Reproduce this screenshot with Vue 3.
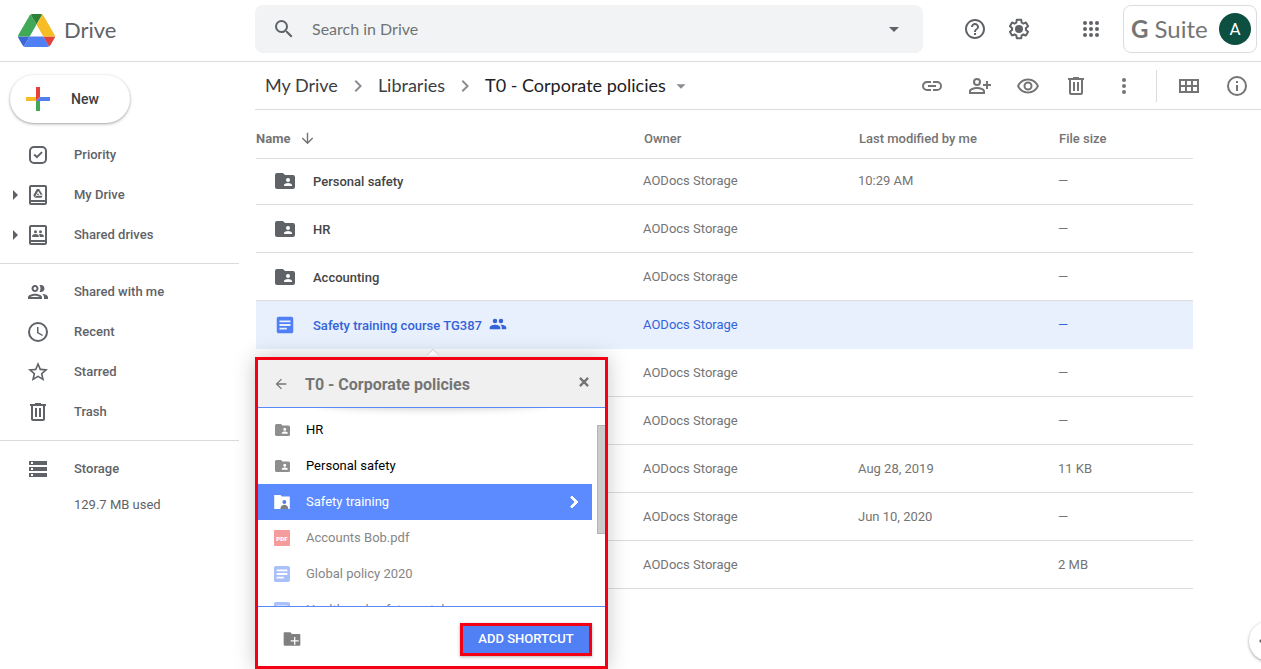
<script setup>
import { ref } from 'vue'

const icons = {
  search: 'M15.5 14h-.79l-.28-.27A6.47 6.47 0 0 0 16 9.5 6.5 6.5 0 1 0 9.5 16c1.61 0 3.09-.59 4.23-1.57l.27.28v.79l5 4.99L20.49 19l-4.99-5zm-6 0C7.01 14 5 11.99 5 9.5S7.01 5 9.5 5 14 7.01 14 9.5 11.99 14 9.5 14z',
  caret: 'M7 10l5 5 5-5z',
  help: 'M11 18h2v-2h-2v2zm1-16C6.48 2 2 6.48 2 12s4.48 10 10 10 10-4.48 10-10S17.52 2 12 2zm0 18c-4.41 0-8-3.59-8-8s3.59-8 8-8 8 3.59 8 8-3.59 8-8 8zm0-14c-2.21 0-4 1.79-4 4h2c0-1.1.9-2 2-2s2 .9 2 2c0 2-3 1.75-3 5h2c0-2.25 3-2.5 3-5 0-2.21-1.79-4-4-4z',
  gear: 'M13.85 22.25h-3.7c-.74 0-1.36-.54-1.45-1.27l-.27-1.89c-.27-.14-.53-.29-.79-.46l-1.8.72c-.7.26-1.47-.03-1.81-.65L2.2 15.53c-.35-.66-.2-1.44.36-1.88l1.53-1.19c-.01-.15-.02-.3-.02-.46 0-.15.01-.31.02-.46l-1.52-1.19c-.59-.45-.74-1.26-.37-1.88l1.85-3.19c.34-.62 1.11-.9 1.79-.63l1.81.73c.26-.17.52-.32.78-.46l.27-1.91c.09-.7.71-1.25 1.44-1.25h3.7c.74 0 1.36.54 1.45 1.27l.27 1.89c.27.14.53.29.79.46l1.8-.72c.71-.26 1.48.03 1.82.65l1.84 3.18c.36.66.2 1.44-.36 1.88l-1.52 1.19c.01.15.02.3.02.46s-.01.31-.02.46l1.52 1.19c.56.45.72 1.23.37 1.86l-1.86 3.22c-.34.62-1.11.9-1.8.63l-1.8-.72c-.26.17-.52.32-.78.46l-.27 1.91c-.1.68-.72 1.22-1.46 1.22zm-3.23-2h2.76l.37-2.55.53-.22c.44-.18.88-.44 1.34-.78l.45-.34 2.38.96 1.38-2.4-2.03-1.58.07-.56c.03-.26.06-.51.06-.78s-.03-.53-.06-.78l-.07-.56 2.03-1.58-1.39-2.4-2.39.96-.45-.35c-.42-.32-.87-.58-1.33-.77l-.52-.22-.37-2.55h-2.76l-.37 2.55-.53.21c-.44.19-.88.44-1.34.79l-.45.33-2.38-.95-1.39 2.39 2.03 1.58-.07.56a7 7 0 0 0-.06.79c0 .26.02.53.06.78l.07.56-2.03 1.58 1.38 2.4 2.39-.96.45.35c.43.33.86.58 1.33.77l.53.22.38 2.55z',
  apps: 'M6 8a2 2 0 1 0 0-4 2 2 0 0 0 0 4zm6 0a2 2 0 1 0 0-4 2 2 0 0 0 0 4zm6 0a2 2 0 1 0 0-4 2 2 0 0 0 0 4zM6 14a2 2 0 1 0 0-4 2 2 0 0 0 0 4zm6 0a2 2 0 1 0 0-4 2 2 0 0 0 0 4zm6 0a2 2 0 1 0 0-4 2 2 0 0 0 0 4zM6 20a2 2 0 1 0 0-4 2 2 0 0 0 0 4zm6 0a2 2 0 1 0 0-4 2 2 0 0 0 0 4zm6 0a2 2 0 1 0 0-4 2 2 0 0 0 0 4z',
  priority: 'M8 3h8a5 5 0 0 1 5 5v8a5 5 0 0 1-5 5H8a5 5 0 0 1-5-5V8a5 5 0 0 1 5-5zm0 2a3 3 0 0 0-3 3v8a3 3 0 0 0 3 3h8a3 3 0 0 0 3-3V8a3 3 0 0 0-3-3H8zm2.9 10.6L7.5 12.2l1.4-1.4 2 2 4.4-4.4 1.4 1.4-5.8 5.8z',
  mydrive: 'M19 2H5a2 2 0 0 0-2 2v16c0 1.100.9 2 2 2h14a2 2 0 0 0 2-2V4a2 2 0 0 0-2-2zm0 18H5v-1h14v1zm0-3H5V4h14v13zM13.1 6h-2.200L7.300 12.300l1.200 2.100 3.800-6.500 2.300 3.900h2L13.100 6zM12 10.200l-1.100 1.900h2.200L12 10.200zM10 12.700l-1.200 2.100h6.800l1-2.100H10z',
  shared: 'M19 2H5a2 2 0 0 0-2 2v16c0 1.100.9 2 2 2h14a2 2 0 0 0 2-2V4a2 2 0 0 0-2-2zm0 18H5v-1h14v1zm0-3H5V4h14v13zM9.500 10.200a1.500 1.500 0 1 0 0-3 1.500 1.500 0 0 0 0 3zm5 0a1.500 1.500 0 1 0 0-3 1.500 1.500 0 0 0 0 3zM6.200 14v-1c0-1.200 1.700-1.900 3.300-1.900s3.300.7 3.300 1.900v1H6.200zm7.500 0v-1c0-.7-.3-1.200-.8-1.700.5-.1 1-.2 1.600-.2 1.600 0 3.300.7 3.300 1.900v1h-4.100z',
  people: 'M9 13.750c-2.340 0-7 1.170-7 3.500V19h14v-1.750c0-2.330-4.660-3.500-7-3.500zM4.340 17c.84-.58 2.870-1.250 4.660-1.250s3.820.67 4.660 1.250H4.340zM9 12c1.930 0 3.500-1.570 3.500-3.500S10.930 5 9 5 5.500 6.570 5.500 8.500 7.070 12 9 12zm0-5c.83 0 1.500.67 1.500 1.500S9.830 10 9 10s-1.500-.67-1.500-1.500S8.170 7 9 7zm7.040 6.810c1.160.84 1.960 1.960 1.960 3.440V19h4v-1.750c0-2.020-3.500-3.170-5.960-3.440zM15 12c1.930 0 3.500-1.570 3.500-3.500S16.930 5 15 5c-.54 0-1.040.13-1.500.35.63.89 1 1.980 1 3.150s-.37 2.260-1 3.150c.46.22.96.35 1.500.35z',
  recent: 'M12 2a10 10 0 1 0 0 20 10 10 0 0 0 0-20zm0 18a8 8 0 1 1 0-16 8 8 0 0 1 0 16zm.500-13H11v6l5.200 3.100.8-1.200-4.500-2.700V7z',
  star: 'M22 9.240l-7.190-.62L12 2 9.190 8.630 2 9.240l5.460 4.730L5.820 21 12 17.270 18.180 21l-1.630-7.030L22 9.240zM12 15.400l-3.760 2.270 1-4.280-3.320-2.880 4.380-.38L12 6.100l1.710 4.040 4.380.38-3.320 2.880 1 4.280L12 15.400z',
  trash: 'M15 4V3H9v1H4v2h1v13c0 1.100.9 2 2 2h10a2 2 0 0 0 2-2V6h1V4h-5zm2 15H7V6h10v13zM9 8h2v9H9zm4 0h2v9h-2z',
  storage: 'M3 20h18v-4H3v4zm2-3h2v2H5v-2zM3 4v4h18V4H3zm4 3H5V5h2v2zm-4 7h18v-4H3v4zm2-3h2v2H5v-2z',
  link: 'M3.900 12c0-1.710 1.390-3.100 3.100-3.100h4V7H7a5 5 0 0 0 0 10h4v-1.900H7c-1.710 0-3.100-1.390-3.100-3.100zM8 13h8v-2H8v2zm9-6h-4v1.900h4a3.100 3.100 0 0 1 0 6.200h-4V17h4a5 5 0 0 0 0-10z',
  addperson: 'M9 12a4 4 0 1 0 0-8 4 4 0 0 0 0 8zm0-6a2 2 0 1 1 0 4 2 2 0 0 1 0-4zm0 7c-2.670 0-8 1.340-8 4v3h16v-3c0-2.660-5.330-4-8-4zm6 5H3v-.99C3.200 16.290 6.300 15 9 15s5.800 1.290 6 2v1zm5-8V7h-2v3h-3v2h3v3h2v-3h3v-2h-3z',
  eye: 'M12 6.500c3.790 0 7.170 2.130 8.820 5.500-1.650 3.370-5.030 5.500-8.820 5.500S4.830 15.370 3.180 12C4.830 8.630 8.210 6.500 12 6.500m0-2C7 4.500 2.730 7.610 1 12c1.730 4.390 6 7.500 11 7.500s9.270-3.110 11-7.500c-1.730-4.390-6-7.500-11-7.500zm0 5a2.500 2.500 0 1 1 0 5 2.500 2.500 0 0 1 0-5m0-2a4.500 4.500 0 1 0 0 9 4.500 4.500 0 0 0 0-9z',
  more: 'M12 8a2 2 0 1 0 0-4 2 2 0 0 0 0 4zm0 6a2 2 0 1 0 0-4 2 2 0 0 0 0 4zm0 6a2 2 0 1 0 0-4 2 2 0 0 0 0 4z',
  grid: 'M2 5v14h20V5H2zm6 2v4H4V7h4zm-4 10v-4h4v4H4zm6 0v-4h4v4h-4zm10 0h-4v-4h4v4zm-4-6V7h4v4h-4zm-2-4v4h-4V7h4z',
  info: 'M11 17h2v-6h-2v6zm1-15a10 10 0 1 0 0 20 10 10 0 0 0 0-20zm0 18a8 8 0 1 1 0-16 8 8 0 0 1 0 16zM11 9h2V7h-2v2z',
  chevron: 'M10 6L8.590 7.410 13.170 12l-4.580 4.590L10 18l6-6z',
  down: 'M20 12l-1.410-1.410L13 16.170V4h-2v12.170l-5.580-5.590L4 12l8 8 8-8z',
  back: 'M20 11H7.830l5.590-5.590L12 4l-8 8 8 8 1.410-1.410L7.830 13H20v-2z',
  close: 'M19 6.410L17.590 5 12 10.590 6.410 5 5 6.410 10.590 12 5 17.590 6.410 19 12 13.410 17.590 19 19 17.590 13.410 12z',
  folder: 'M20 6h-8l-2-2H4a2 2 0 0 0-2 2v12c0 1.100.9 2 2 2h16a2 2 0 0 0 2-2V8a2 2 0 0 0-2-2zm-5 3a2 2 0 1 1 0 4 2 2 0 0 1 0-4zm4 8h-8v-1c0-1.330 2.670-2 4-2s4 .67 4 2v1z',
  newfolder: 'M21 6h-9l-2-2H3a1 1 0 0 0-1 1v14c0 .6.400 1 1 1h18c.6 0 1-.4 1-1V7c0-.6-.4-1-1-1zm-1 9h-4v4h-1.500v-4h-4v-1.500h4v-4H16v4h4V15z',
  doc: 'M19 3H5a2 2 0 0 0-2 2v14c0 1.100.9 2 2 2h14a2 2 0 0 0 2-2V5a2 2 0 0 0-2-2zm-5 14H6v-2h8v2zm4-4H6v-2h12v2zm0-4H6V7h12v2z',
  file: 'M20 3H4a1 1 0 0 0-1 1v16c0 .6.400 1 1 1h16c.6 0 1-.4 1-1V4c0-.6-.4-1-1-1z',
  group: 'M16 11a3 3 0 1 0 0-6 3 3 0 0 0 0 6zm-8 0a3 3 0 1 0 0-6 3 3 0 0 0 0 6zm0 2c-2.330 0-7 1.170-7 3.500V19h14v-2.500C15 14.170 10.330 13 8 13zm8 0-.97.050c1.160.84 1.970 1.970 1.970 3.450V19h6v-2.500c0-2.330-4.670-3.500-7-3.500z'
}

const navGroups = [
  [
    { label: 'Priority', icon: 'priority' },
    { label: 'My Drive', icon: 'mydrive', expandable: true },
    { label: 'Shared drives', icon: 'shared', expandable: true }
  ],
  [
    { label: 'Shared with me', icon: 'people' },
    { label: 'Recent', icon: 'recent' },
    { label: 'Starred', icon: 'star' },
    { label: 'Trash', icon: 'trash' }
  ],
  [{ label: 'Storage', icon: 'storage' }]
]

const actions = [
  { label: 'Get link', icon: 'link' },
  { label: 'Share', icon: 'addperson' },
  { label: 'Preview', icon: 'eye' },
  { label: 'Remove', icon: 'trash' },
  { label: 'More actions', icon: 'more' }
]

const rows = [
  { name: 'Personal safety', icon: 'folder', modified: '10:29 AM', size: '—' },
  { name: 'HR', icon: 'folder', modified: '', size: '—' },
  { name: 'Accounting', icon: 'folder', modified: '', size: '—' },
  { name: 'Safety training course TG387', icon: 'doc', modified: '', size: '—', selected: true },
  { name: '', modified: '', size: '—' },
  { name: '', modified: '', size: '—' },
  { name: '', modified: 'Aug 28, 2019', size: '11 KB' },
  { name: '', modified: 'Jun 10, 2020', size: '—' },
  { name: '', modified: '', size: '2 MB' }
]

const entries = [
  { name: 'HR', kind: 'folder' },
  { name: 'Personal safety', kind: 'folder' },
  { name: 'Safety training', kind: 'folder', current: true },
  { name: 'Accounts Bob.pdf', kind: 'pdf' },
  { name: 'Global policy 2020', kind: 'doc' },
  { name: 'Health and safety portal', kind: 'doc' }
]

const query = ref('')
</script>

<template>
  <div class="page">
    <header class="top">
      <a href="#" class="brand">
        <svg class="logo" viewBox="0 0 87.3 78" aria-hidden="true">
          <path fill="#3a66d6" d="m6.600 66.850 3.850 6.650c.8 1.400 1.950 2.500 3.300 3.300l13.750-23.800h-27.500c0 1.550.4 3.100 1.200 4.500z" />
          <path fill="#3fa957" d="m43.650 25-13.750-23.800c-1.350.8-2.500 1.900-3.300 3.300l-25.400 44a9.060 9.060 0 0 0-1.200 4.500h27.500z" />
          <path fill="#e3413a" d="m73.550 76.800c1.350-.8 2.500-1.900 3.300-3.300l9.250-16c.8-1.400 1.200-2.950 1.200-4.500h-27.500l5.850 11.500z" />
          <path fill="#2c8038" d="m43.650 25 13.750-23.800c-1.350-.8-2.900-1.200-4.500-1.200h-18.500c-1.600 0-3.150.45-4.500 1.200z" />
          <path fill="#5080f3" d="m59.800 53h-32.300l-13.750 23.800c1.350.8 2.900 1.200 4.500 1.200h50.800c1.600 0 3.150-.45 4.500-1.200z" />
          <path fill="#f6bd26" d="m73.400 26.500-12.700-22c-.8-1.400-1.950-2.500-3.300-3.300l-13.750 23.800 16.150 28h27.450c0-1.550-.4-3.100-1.200-4.500z" />
        </svg>
        <span>Drive</span>
      </a>
      <form class="search" role="search" @submit.prevent>
        <button type="submit" aria-label="Search"><svg class="icon" viewBox="0 0 24 24"><path :d="icons.search" /></svg></button>
        <input v-model="query" type="text" placeholder="Search in Drive" aria-label="Search in Drive" />
        <button type="button" aria-label="Search options"><svg class="icon" viewBox="0 0 24 24"><path :d="icons.caret" /></svg></button>
      </form>
      <div class="tools">
        <button type="button" aria-label="Support"><svg class="icon" viewBox="0 0 24 24"><path :d="icons.help" /></svg></button>
        <button type="button" aria-label="Settings"><svg class="icon" viewBox="0 0 24 24"><path :d="icons.gear" /><circle cx="12" cy="12" r="4" /></svg></button>
        <button type="button" class="apps" aria-label="Apps"><svg class="icon" viewBox="0 0 24 24"><path :d="icons.apps" /></svg></button>
      </div>
      <button type="button" class="account">
        <span class="suite"><b>G</b> Suite</span>
        <span class="avatar">A</span>
      </button>
    </header>

    <div class="body">
      <aside class="side">
        <button type="button" class="new">
          <svg class="plus" viewBox="0 0 24 24" aria-hidden="true">
            <path fill="#f6bd26" d="M0 10h10v4H0z" />
            <path fill="#5080f3" d="M14 10h10v4H10z" />
            <path fill="#3fa957" d="M10 14h4v10h-4z" />
            <path fill="#e3413a" d="M10 0h4v10l-4 4z" />
          </svg>
          New
        </button>
        <nav>
          <ul v-for="(group, g) in navGroups" :key="g">
            <li v-for="item in group" :key="item.label">
              <a href="#">
                <span class="twist"><svg v-if="item.expandable" viewBox="0 0 5 10"><path d="M0 0l5 5-5 5z" /></svg></span>
                <svg class="icon" viewBox="0 0 24 24"><path :d="icons[item.icon]" /></svg>
                <span>{{ item.label }}</span>
              </a>
            </li>
          </ul>
        </nav>
        <p class="used">129.7 MB used</p>
      </aside>

      <main class="main">
        <div class="bar">
          <nav class="crumbs" aria-label="Folder path">
            <a href="#">My Drive</a>
            <svg class="sep" viewBox="0 0 24 24"><path :d="icons.chevron" /></svg>
            <a href="#">Libraries</a>
            <svg class="sep" viewBox="0 0 24 24"><path :d="icons.chevron" /></svg>
            <button type="button"><span>T0 - Corporate policies</span><svg viewBox="0 0 24 24"><path :d="icons.caret" /></svg></button>
          </nav>
          <div class="actions">
            <button v-for="a in actions" :key="a.label" type="button" :aria-label="a.label"><svg class="icon" viewBox="0 0 24 24"><path :d="icons[a.icon]" /></svg></button>
            <span class="rule"></span>
            <button type="button" aria-label="Grid view"><svg class="icon" viewBox="0 0 24 24"><path :d="icons.grid" /></svg></button>
            <button type="button" aria-label="View details"><svg class="icon" viewBox="0 0 24 24"><path :d="icons.info" /></svg></button>
          </div>
        </div>

        <div class="listing">
          <table>
            <thead>
              <tr>
                <th class="name"><span class="sort">Name<svg viewBox="0 0 24 24"><path :d="icons.down" /></svg></span></th>
                <th class="owner">Owner</th>
                <th class="modified">Last modified by me</th>
                <th class="size">File size</th>
              </tr>
            </thead>
            <tbody>
              <tr v-for="(row, i) in rows" :key="i" :class="{ selected: row.selected }">
                <td>
                  <div v-if="row.name" class="file">
                    <svg class="icon" viewBox="0 0 24 24"><path :d="icons[row.icon]" /></svg>
                    <span>{{ row.name }}</span>
                    <svg v-if="row.selected" class="with" viewBox="0 0 24 24"><path :d="icons.group" /></svg>
                  </div>
                </td>
                <td>AODocs Storage</td>
                <td>{{ row.modified }}</td>
                <td>{{ row.size }}</td>
              </tr>
            </tbody>
          </table>

          <section class="picker" aria-label="Add shortcut">
            <span class="pointer"></span>
            <header>
              <button type="button" aria-label="Back"><svg viewBox="0 0 24 24"><path :d="icons.back" /></svg></button>
              <h2>T0 - Corporate policies</h2>
              <button type="button" class="close" aria-label="Close"><svg viewBox="0 0 24 24"><path :d="icons.close" /></svg></button>
            </header>
            <div class="scroller">
              <ul>
                <li v-for="e in entries" :key="e.name" :class="[e.kind, { current: e.current }]">
                  <span class="slot">
                    <svg v-if="e.kind === 'pdf'" viewBox="3 3 18 18">
                      <path :d="icons.file" />
                      <text x="12" y="15" text-anchor="middle">PDF</text>
                    </svg>
                    <svg v-else-if="e.current" viewBox="2 3 20 18">
                      <path d="M2 3h8l2 2h10v16H2z" />
                      <circle class="head" cx="15" cy="12" r="2.5" />
                      <path class="torso" d="M10 20c0-3 3-4.500 5-4.500s5 1.500 5 4.500v1H10z" />
                    </svg>
                    <svg v-else-if="e.kind === 'folder'" viewBox="2 4 20 16"><path :d="icons.folder" /></svg>
                    <svg v-else viewBox="3 3 18 18"><path :d="icons.doc" /></svg>
                  </span>
                  <span class="label">{{ e.name }}</span>
                  <svg v-if="e.current" class="open" viewBox="0 0 24 24"><path :d="icons.chevron" /></svg>
                </li>
              </ul>
              <span class="thumb"></span>
            </div>
            <footer>
              <button type="button" class="make" aria-label="New folder"><svg viewBox="0 0 24 24"><path :d="icons.newfolder" /></svg></button>
              <button type="button" class="add">ADD SHORTCUT</button>
            </footer>
          </section>
        </div>
      </main>
    </div>

    <button type="button" class="drawer" aria-label="Show side panel"><svg viewBox="0 0 24 24"><path :d="icons.chevron" /></svg></button>
  </div>
</template>

<style>
body {
  margin: 0;
  background: #fff;
}
</style>

<style scoped>
* {
  box-sizing: border-box;
}
.page {
  position: relative;
  display: flex;
  flex-direction: column;
  height: 100vh;
  overflow: hidden;
  font-family: Roboto, 'Liberation Sans', sans-serif;
  font-size: 13px;
  line-height: 20px;
  color: #5f6368;
}
button {
  display: flex;
  align-items: center;
  padding: 0;
  border: 0;
  background: none;
  font: inherit;
  color: inherit;
}
a {
  color: inherit;
  text-decoration: none;
}
ul {
  margin: 0;
  padding: 0;
  list-style: none;
}
svg {
  display: block;
  flex: none;
  fill: currentColor;
}
.icon {
  width: 24px;
  height: 24px;
}
.top {
  display: flex;
  flex: none;
  align-items: flex-start;
  height: 62px;
  padding: 5px 4px 0 0;
  border-bottom: 1px solid #dadce0;
}
.brand {
  display: flex;
  flex: none;
  align-items: center;
  gap: 9px;
  width: 255px;
  height: 50px;
  padding-left: 18px;
  font-family: Lato, Roboto, sans-serif;
  font-size: 22px;
}
.logo {
  width: 37px;
  height: 33px;
}
.search {
  display: flex;
  flex: 1;
  align-items: center;
  height: 48px;
  padding: 0 17px;
  border-radius: 8px;
  background: #f1f3f4;
}
.search input {
  flex: 1;
  min-width: 0;
  margin-left: 16px;
  padding: 0;
  border: 0;
  outline: 0;
  background: none;
  font: 16px/24px Lato, Roboto, sans-serif;
  color: #202124;
}
.search input::placeholder {
  color: #6f7377;
  opacity: 1;
}
.tools {
  display: flex;
  gap: 20px;
  height: 48px;
  margin: 0 20px 0 40px;
}
.apps {
  margin-left: 28px;
}
.account {
  justify-content: space-between;
  width: 134px;
  height: 48px;
  padding: 0 5px 0 7px;
  border: 1px solid #dadce0;
  border-radius: 8px;
}
.suite {
  font-family: Lato, Roboto, sans-serif;
  font-size: 24px;
  line-height: 32px;
  color: #757575;
}
.avatar {
  width: 32px;
  height: 32px;
  border-radius: 50%;
  background: #0d4f40;
  font-size: 17px;
  line-height: 32px;
  text-align: center;
  color: #fff;
}
.body {
  display: flex;
  flex: 1;
  min-height: 0;
}
.side {
  flex: none;
  width: 239px;
  margin-right: 16px;
  padding-top: 13px;
}
.new {
  gap: 21px;
  width: 120px;
  height: 48px;
  margin: 0 0 12px 10px;
  padding-left: 16px;
  border-radius: 24px;
  box-shadow: 0 1px 2px rgba(60, 64, 67, 0.3), 0 1px 3px 1px rgba(60, 64, 67, 0.15);
  font-size: 14px;
  font-weight: 500;
  color: #3c4043;
}
.plus {
  width: 24px;
  height: 24px;
}
.side ul + ul {
  margin-top: 8px;
  padding-top: 8px;
  border-top: 1px solid #dadce0;
}
.side li a {
  display: flex;
  align-items: center;
  height: 40px;
  font-weight: 500;
}
.twist {
  width: 26px;
  padding-left: 13px;
}
.twist svg {
  width: 5px;
  height: 10px;
}
.side li .icon {
  margin-right: 24px;
}
.used {
  margin: 6px 0 0 74px;
}
.main {
  flex: 1;
  min-width: 0;
}
.bar {
  display: flex;
  align-items: center;
  justify-content: space-between;
  height: 48px;
  border-bottom: 1px solid #dadce0;
}
.crumbs {
  display: flex;
  align-items: center;
  gap: 8px;
  padding-left: 10px;
  font-family: Lato, Roboto, sans-serif;
  font-size: 18px;
  line-height: 24px;
  color: #3c4043;
}
.crumbs a,
.crumbs span {
  padding-bottom: 2px;
}
.crumbs button {
  gap: 4px;
  color: #202124;
}
.crumbs svg {
  width: 24px;
  height: 24px;
  color: #8a8d91;
}
.crumbs button svg {
  width: 22px;
  height: 22px;
}
.actions {
  display: flex;
  align-items: center;
  color: #747474;
}
.actions button {
  justify-content: center;
  width: 48px;
  height: 48px;
}
.rule {
  width: 1px;
  height: 32px;
  margin: 0 8px;
  background: #dadce0;
}
.listing {
  position: relative;
}
table {
  width: calc(100% - 69px);
  margin-left: 1px;
  border-collapse: separate;
  border-spacing: 0;
  table-layout: fixed;
  text-align: left;
}
th {
  height: 49px;
  padding: 9px 0 0 1px;
  border-bottom: 1px solid #dadce0;
  font-weight: 500;
  color: #747474;
}
.name {
  padding-left: 0;
}
.owner {
  width: 215px;
}
.modified {
  width: 200px;
}
.size {
  width: 135px;
}
.sort {
  display: flex;
  align-items: center;
  gap: 9px;
  font-weight: 700;
}
.sort svg {
  width: 17px;
  height: 17px;
}
td {
  height: 48px;
  padding: 0;
  border-bottom: 1px solid #dadce0;
  color: #747474;
}
tbody tr:first-child td {
  height: 46px;
  padding-bottom: 2px;
}
.file {
  display: flex;
  align-items: center;
  padding-left: 17px;
  font-weight: 500;
  color: #454545;
}
.file span {
  padding-top: 2px;
}
.file .icon {
  margin-right: 16px;
  color: #5f6368;
}
.file .with {
  width: 18px;
  height: 18px;
  margin: 0 0 2px 7px;
}
.selected td {
  border-bottom-color: #e8f0fe;
  background: #e8f0fe;
  color: #3463d8;
}
.selected .file {
  color: #3463d8;
}
.selected .file .icon {
  width: 22px;
  height: 22px;
  margin: 0 17px 0 1px;
  color: #5080f3;
}
.picker {
  position: absolute;
  top: 247px;
  left: 0;
  width: 353px;
  border: 3px solid #f40014;
  background: #fff;
  box-shadow: 0 0 20px rgba(0, 0, 0, 0.22);
}
.pointer {
  position: absolute;
  top: -9px;
  left: 169px;
  width: 12px;
  height: 12px;
  border: solid #ccc;
  border-width: 1px 0 0 1px;
  background: #fafafa;
  clip-path: polygon(0 0, 80% 0, 0 80%);
  transform: rotate(45deg);
}
.picker header {
  display: flex;
  align-items: center;
  height: 48px;
  padding: 0 14px 0 15px;
  border-bottom: 1px solid #5b88f8;
  background: #f0f0f0;
  color: #757575;
}
.picker header svg {
  width: 16px;
  height: 16px;
}
.picker h2 {
  flex: 1;
  margin: 0 0 0 16px;
  padding-top: 2px;
  font-size: 16px;
  font-weight: 700;
}
.picker .close {
  padding-bottom: 4px;
}
.picker .close svg {
  width: 14px;
  height: 14px;
  stroke: currentColor;
  stroke-width: 2px;
}
.scroller {
  position: relative;
  height: 199px;
  padding: 4px 13px 0 0;
  overflow: hidden;
  border-bottom: 1px solid #5b88f8;
}
.scroller::before {
  position: absolute;
  top: -12px;
  right: 60px;
  left: 60px;
  height: 12px;
  border-radius: 50%;
  box-shadow: 0 0 8px rgba(0, 0, 0, 0.25);
  content: '';
}
.scroller li {
  display: flex;
  align-items: center;
  height: 36px;
  padding: 0 6px 0 15px;
  color: #868686;
}
.label {
  flex: 1;
  margin-left: 15px;
}
.slot {
  display: flex;
  justify-content: center;
  width: 18px;
  color: #a9c0fa;
}
.slot svg {
  width: 16px;
  height: 16px;
}
.scroller .folder {
  color: #000;
}
.folder .slot {
  color: #8e8e8e;
}
.folder .slot svg {
  width: 15px;
  height: 12px;
}
.scroller .current {
  background: #5c8aff;
  color: #fff;
}
.current .slot {
  color: #fff;
}
.current .slot svg {
  width: 16px;
  height: 14px;
}
.head {
  fill: #5c7fd8;
}
.torso {
  fill: #808080;
}
.pdf .slot {
  color: #f49c9c;
}
.pdf text {
  font-size: 7px;
  font-weight: 900;
  fill: #fff;
}
.open {
  width: 24px;
  height: 24px;
  stroke: currentColor;
}
.thumb {
  position: absolute;
  top: 17px;
  right: 0;
  width: 8px;
  height: 109px;
  border: 1px solid #b4b4b4;
  border-right: 0;
  background: #cbcbcb;
}
.picker footer {
  display: flex;
  align-items: center;
  justify-content: space-between;
  height: 59px;
  padding: 6px 13px 0 24px;
}
.make {
  padding-bottom: 1px;
  color: #808080;
}
.make svg {
  width: 20px;
  height: 20px;
}
.add {
  justify-content: center;
  width: 132px;
  height: 33px;
  padding-bottom: 2px;
  border: 3px solid #f40014;
  background: #5080f3;
  box-shadow: 0 1px 3px rgba(0, 0, 0, 0.3);
  font-weight: 500;
  color: #fff;
}
.drawer {
  position: absolute;
  right: -28px;
  bottom: 8px;
  width: 40px;
  height: 40px;
  padding-left: 2px;
  border-radius: 50%;
  background: #fff;
  box-shadow: 0 1px 3px rgba(60, 64, 67, 0.5);
}
.drawer svg {
  width: 24px;
  height: 24px;
  transform: rotate(180deg);
}
</style>
